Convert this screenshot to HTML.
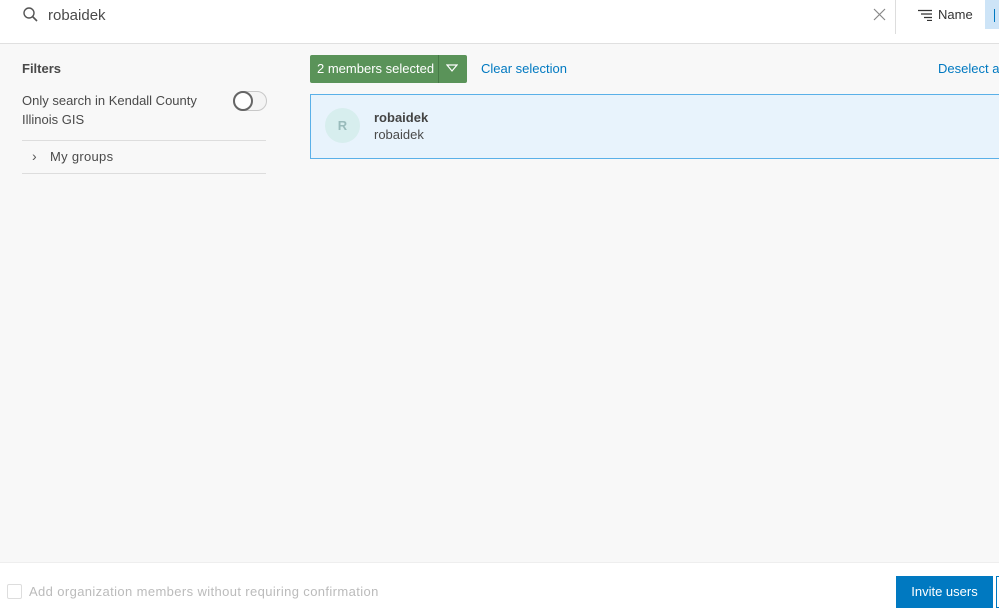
<!DOCTYPE html>
<html><head><style>
*{box-sizing:border-box;margin:0;padding:0}
body{width:999px;height:614px;overflow:hidden;background:#f8f8f8;font-family:"Liberation Sans",sans-serif;color:#4a4a4a;position:relative}
.top{position:absolute;left:0;top:0;width:999px;height:44px;background:#fff;border-bottom:1px solid #e0e0e0}
.abs{position:absolute}
</style></head><body>
<div class="top">
<svg class="abs" style="left:22px;top:6px" width="18" height="18" viewBox="0 0 18 18"><circle cx="7" cy="7" r="5" fill="none" stroke="#555" stroke-width="1.4"/><line x1="10.5" y1="10.5" x2="15" y2="15" stroke="#555" stroke-width="1.6"/></svg>
<div class="abs" style="left:48px;top:7px;font-size:15px;color:#4a4a4a">robaidek</div>
<svg class="abs" style="left:873px;top:8px" width="13" height="13" viewBox="0 0 13 13"><path d="M1 1L12 12M12 1L1 12" stroke="#888" stroke-width="1.2"/></svg>
<div class="abs" style="left:895px;top:0;width:1px;height:34px;background:#ddd"></div>
<svg class="abs" style="left:918px;top:9px" width="14" height="12" viewBox="0 0 14 12"><path d="M0 1.5H14M3 5H14M6 8.5H14M9 11.5H14" stroke="#333" stroke-width="1.2"/></svg>
<div class="abs" style="left:938px;top:7px;font-size:13px;color:#333">Name</div>
<div class="abs" style="left:985px;top:0;width:14px;height:29px;background:#cde4f7"></div>
<div class="abs" style="left:994px;top:9px;width:1px;height:13px;background:#0079c1"></div>
</div>
<div class="abs" style="left:22px;top:61px;font-size:13px;color:#4a4a4a;font-weight:bold">Filters</div>
<div class="abs" style="left:22px;top:91px;font-size:13px;line-height:19px;color:#4a4a4a;width:200px">Only search in Kendall County Illinois GIS</div>
<div class="abs" style="left:233px;top:91px;width:34px;height:20px;border:1px solid #c8c8c8;border-radius:10px;background:#f4f4f4"></div>
<div class="abs" style="left:233px;top:91px;width:20px;height:20px;border:2px solid #666;border-radius:50%;background:#fff"></div>
<div class="abs" style="left:22px;top:140px;width:244px;height:1px;background:#ddd"></div>
<div class="abs" style="left:32px;top:148px;font-size:14px;color:#555">&#8250;</div>
<div class="abs" style="left:50px;top:149px;font-size:13px;color:#4a4a4a;letter-spacing:0.3px">My groups</div>
<div class="abs" style="left:22px;top:173px;width:244px;height:1px;background:#ddd"></div>
<div class="abs" style="left:310px;top:55px;width:157px;height:28px;background:#5a9359;border-radius:2px"></div>
<div class="abs" style="left:438px;top:55px;width:1px;height:28px;background:#467a46"></div>
<div class="abs" style="left:317px;top:61px;font-size:13px;color:#fff">2 members selected</div>
<svg class="abs" style="left:446px;top:64px" width="12" height="9" viewBox="0 0 12 9"><path d="M1 1H11L6 7Z" fill="none" stroke="#fff" stroke-width="1.2"/></svg>
<div class="abs" style="left:481px;top:61px;font-size:13px;color:#0079c1">Clear selection</div>
<div class="abs" style="left:938px;top:61px;font-size:13px;color:#0079c1;white-space:nowrap">Deselect all</div>
<div class="abs" style="left:310px;top:94px;width:700px;height:65px;background:#e8f3fc;border:1px solid #5ab0e8"></div>
<div class="abs" style="left:325px;top:108px;width:35px;height:35px;border-radius:50%;background:#d7eeee;color:#9bb;font-size:13px;font-weight:bold;text-align:center;line-height:35px">R</div>
<div class="abs" style="left:374px;top:110px;font-size:13px;font-weight:bold;color:#444">robaidek</div>
<div class="abs" style="left:374px;top:127px;font-size:13px;color:#4a4a4a">robaidek</div>
<div class="abs" style="left:0;top:562px;width:999px;height:52px;background:#fff;border-top:1px solid #eee"></div>
<div class="abs" style="left:7px;top:584px;width:15px;height:15px;border:1px solid #ddd;border-radius:2px"></div>
<div class="abs" style="left:29px;top:584px;font-size:13px;color:#bbb;letter-spacing:0.38px">Add organization members without requiring confirmation</div>
<div class="abs" style="left:896px;top:576px;width:97px;height:32px;background:#0079c1"></div>
<div class="abs" style="left:896px;top:584px;width:97px;text-align:center;font-size:13px;color:#fff">Invite users</div>
<div class="abs" style="left:996px;top:576px;width:3px;height:32px;border:1px solid #0079c1;border-right:none"></div>
</body></html>
